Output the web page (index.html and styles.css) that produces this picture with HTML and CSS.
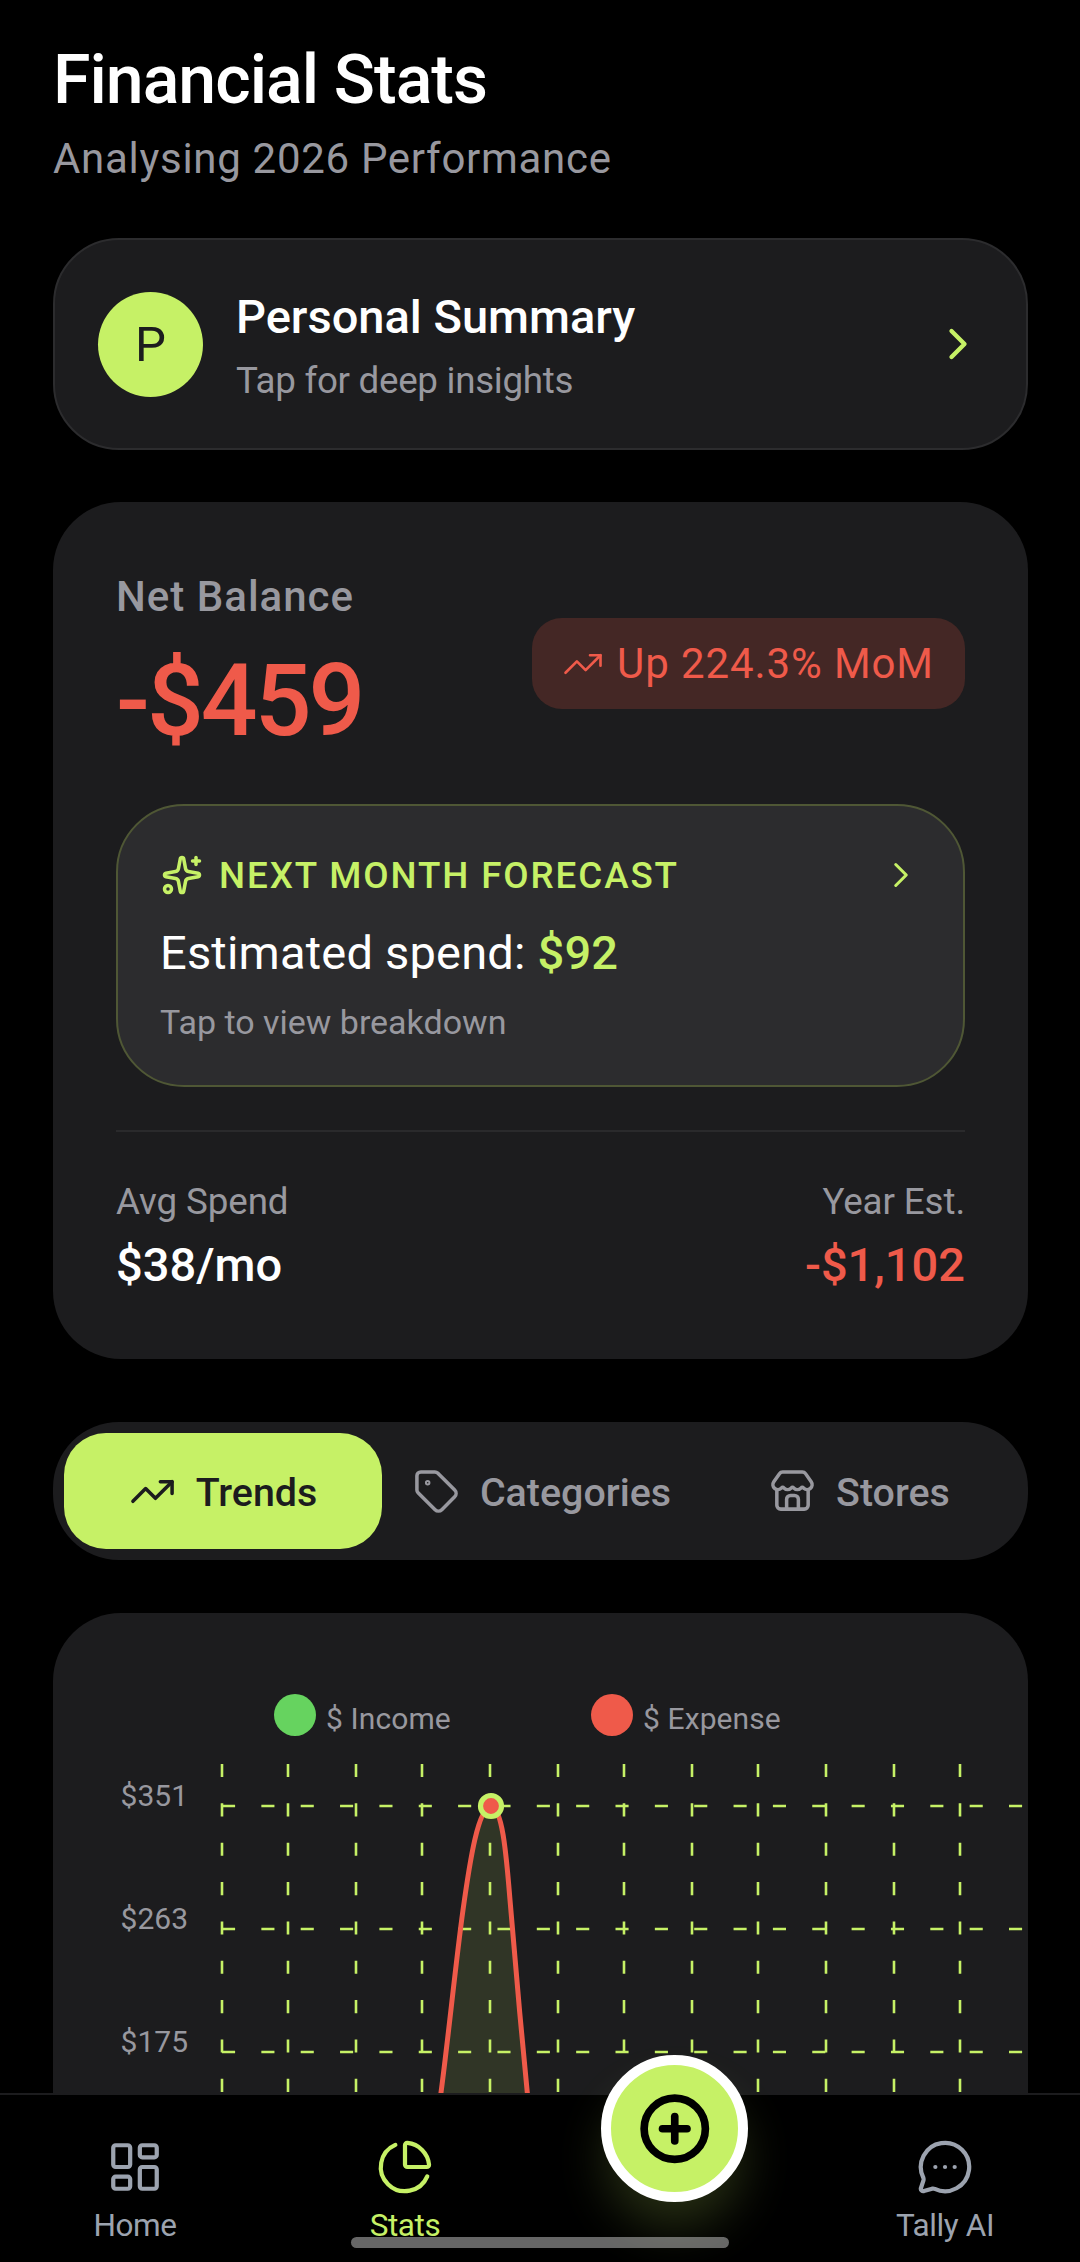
FILE: index.html
```html
<!DOCTYPE html>
<html lang="en">
<head>
<meta charset="utf-8">
<title>Financial Stats</title>
<link rel="stylesheet" href="styles.css">
</head>
<body>
<svg class="sprite" width="0" height="0" aria-hidden="true">
  <symbol id="i-chev" viewBox="0 0 24 24"><path d="m9 18 6-6-6-6"/></symbol>
  <symbol id="i-trend" viewBox="0 0 24 24"><polyline points="22 7 13.5 15.5 8.5 10.5 2 17"/><polyline points="16 7 22 7 22 13"/></symbol>
</svg>
<main class="page">
  <header class="head">
    <h1 class="title">Financial Stats</h1>
    <p class="subtitle">Analysing 2026 Performance</p>
  </header>

  <section class="summary">
    <div class="avatar">P</div>
    <div class="summary-text">
      <div class="summary-title">Personal Summary</div>
      <div class="summary-sub">Tap for deep insights</div>
    </div>
    <svg class="ico ico-chev lime"><use href="#i-chev"/></svg>
  </section>

  <section class="balance">
    <div class="balance-top">
      <div>
        <div class="balance-label">Net Balance</div>
        <div class="balance-value">-$459</div>
      </div>
      <div class="badge">
        <svg class="ico ico-badge"><use href="#i-trend"/></svg>
        <span>Up 224.3% MoM</span>
      </div>
    </div>
    <div class="forecast">
      <div class="forecast-head">
        <svg class="ico ico-spark" viewBox="0 0 24 24"><path d="M11.017 2.814a1 1 0 0 1 1.966 0l1.051 5.558a2 2 0 0 0 1.594 1.594l5.558 1.051a1 1 0 0 1 0 1.966l-5.558 1.051a2 2 0 0 0-1.594 1.594l-1.051 5.558a1 1 0 0 1-1.966 0l-1.051-5.558a2 2 0 0 0-1.594-1.594l-5.558-1.051a1 1 0 0 1 0-1.966l5.558-1.051a2 2 0 0 0 1.594-1.594z"/><path d="M20 2v4"/><path d="M22 4h-4"/><circle cx="4" cy="20" r="2"/></svg>
        <span class="forecast-label">NEXT MONTH FORECAST</span>
        <svg class="ico ico-chev-sm"><use href="#i-chev"/></svg>
      </div>
      <div class="forecast-est">Estimated spend: <b>$92</b></div>
      <div class="forecast-sub">Tap to view breakdown</div>
    </div>
    <div class="stats">
      <div>
        <div class="stat-label">Avg Spend</div>
        <div class="stat-value">$38/mo</div>
      </div>
      <div class="stat-right">
        <div class="stat-label">Year Est.</div>
        <div class="stat-value red">-$1,102</div>
      </div>
    </div>
  </section>

  <nav class="tabs">
    <div class="tab tab-active">
      <svg class="ico ico-tab"><use href="#i-trend"/></svg><span>Trends</span>
    </div>
    <div class="tab tab-cat">
      <svg class="ico ico-tab" viewBox="0 0 24 24"><path d="M12.586 2.586A2 2 0 0 0 11.172 2H4a2 2 0 0 0-2 2v7.172a2 2 0 0 0 .586 1.414l8.704 8.704a2.426 2.426 0 0 0 3.42 0l6.58-6.58a2.426 2.426 0 0 0 0-3.42z"/><circle cx="7.5" cy="7.5" r=".5"/></svg><span>Categories</span>
    </div>
    <div class="tab tab-store">
      <svg class="ico ico-tab" viewBox="0 0 24 24"><path d="M15 21v-5a2 2 0 0 0-2-2h-2a2 2 0 0 0-2 2v5"/><path d="M17.774 10.31a1.12 1.12 0 0 0-1.549 0 2.5 2.5 0 0 1-3.451 0 1.12 1.12 0 0 0-1.548 0 2.5 2.5 0 0 1-3.452 0 1.12 1.12 0 0 0-1.549 0 2.5 2.5 0 0 1-3.77-3.248l2.889-4.184A2 2 0 0 1 7 2h10a2 2 0 0 1 1.653.873l2.895 4.192a2.5 2.5 0 0 1-3.774 3.244"/><path d="M4 10.95V19a2 2 0 0 0 2 2h12a2 2 0 0 0 2-2v-8.05"/></svg><span>Stores</span>
    </div>
  </nav>

  <section class="chart">
    <svg class="plot" viewBox="53 1613 975 480" width="975" height="480">
      <circle class="dot-inc" cx="295" cy="1715" r="21"/>
      <text class="legend" x="326" y="1729">$ Income</text>
      <circle class="dot-exp" cx="612" cy="1715" r="21"/>
      <text class="legend" x="643" y="1729">$ Expense</text>
      <text class="axis" x="188" y="1806">$351</text>
      <text class="axis" x="188" y="1929">$263</text>
      <text class="axis" x="188" y="2052">$175</text>
      <g class="grid">
        <path d="M222 1764V2093M288 1764V2093M356 1764V2093M422 1764V2093M490 1764V2093M558 1764V2093M624 1764V2093M692 1764V2093M758 1764V2093M826 1764V2093M894 1764V2093M960 1764V2093"/>
        <path d="M222 1806H1028M222 1929H1028M222 2052H1028"/>
      </g>
      <path class="area" d="M491 1806C478 1808 470 1860 463 1910S447 2050 440 2100H528C522 2040 517 1960 510 1900S502 1808 491 1806Z"/>
      <path class="curve" d="M440 2100C447 2050 456 1960 463 1910S478 1808 491 1806C502 1808 506 1850 510 1900S522 2040 528 2100"/>
      <circle class="peak" cx="491" cy="1806" r="10.5"/>
    </svg>
  </section>
</main>

<footer class="bottom">
  <a class="nav-item">
    <svg class="ico ico-nav" viewBox="0 0 24 24"><rect x="3" y="3" width="7" height="9" rx="1"/><rect x="14" y="3" width="7" height="5" rx="1"/><rect x="14" y="12" width="7" height="9" rx="1"/><rect x="3" y="16" width="7" height="5" rx="1"/></svg>
    <span>Home</span>
  </a>
  <a class="nav-item nav-active">
    <svg class="ico ico-nav" viewBox="0 0 24 24"><path d="M21 12c.552 0 1.005-.449.95-.998a10 10 0 0 0-8.953-8.951c-.55-.055-.998.398-.998.95v8a1 1 0 0 0 1 1z"/><path d="M21.21 15.89A10 10 0 1 1 8 2.83"/></svg>
    <span>Stats</span>
  </a>
  <div class="nav-item"></div>
  <a class="nav-item">
    <svg class="ico ico-nav" viewBox="0 0 24 24"><path d="M2.992 16.342a2 2 0 0 1 .094 1.167l-1.065 3.29a1 1 0 0 0 1.236 1.168l3.413-.998a2 2 0 0 1 1.099.092 10 10 0 1 0-4.777-4.719"/><path d="M8 12h.01"/><path d="M12 12h.01"/><path d="M16 12h.01"/></svg>
    <span>Tally AI</span>
  </a>
</footer>
<button class="fab" aria-label="Add">
  <svg class="ico ico-fab" viewBox="0 0 24 24"><circle cx="12" cy="12" r="10"/><path d="M8 12h8"/><path d="M12 8v8"/></svg>
</button>
<div class="home-bar"></div>
</body>
</html>
```
FILE: styles.css
```css
* { box-sizing: border-box; }
html, body { margin: 0; padding: 0; background: #000; }
body {
  width: 1080px; height: 2262px; overflow: hidden; position: relative;
  font-family: Roboto, "Noto Sans", sans-serif; color: #fff;
}
.sprite { position: absolute; }
.page { padding: 0 52px 0 53px; display: flex; flex-direction: column; }
.ico { fill: none; stroke: currentColor; stroke-width: 2; stroke-linecap: round; stroke-linejoin: round; flex: none; }
.lime { color: #c6f166; }
.red { color: #ef5a4a; }

.head { padding-top: 38px; height: 238px; }
.title { margin: 0; font-size: 68px; line-height: 84px; font-weight: 500; letter-spacing: -1px; }
.subtitle { margin: 10px 0 0; font-size: 42px; line-height: 54px; color: #98989f; letter-spacing: .7px; }

.summary {
  height: 212px; background: #1c1c1e; border: 2.6px solid #2c2c2e; border-radius: 66px;
  display: flex; align-items: center; padding: 0 42px 0 43px;
}
.avatar {
  width: 105px; height: 105px; border-radius: 50%; background: #c6f166; color: #1c1c1e;
  display: flex; align-items: center; justify-content: center; font-size: 49px; flex: none;
}
.summary-text { margin-left: 33px; flex: 1; padding-top: 2px; }
.summary-title { font-size: 47px; line-height: 64px; font-weight: 500; }
.summary-sub { font-size: 36.75px; line-height: 50px; color: #98989f; margin-top: 7px; letter-spacing: -.3px; }
.ico-chev { width: 52px; height: 52px; }

.balance {
  margin-top: 52px; height: 857px; background: #1c1c1e; border-radius: 68px; padding: 66px 63px 0;
}
.balance-top { display: flex; justify-content: space-between; align-items: flex-start; height: 236px; }
.balance-label { font-size: 42px; line-height: 58px; font-weight: 500; color: #98989f; letter-spacing: 1px; }
.balance-value { font-size: 100px; line-height: 120px; font-weight: 500; color: #ef5a4a; margin-top: 15px; letter-spacing: -3px; }
.badge {
  margin-top: 50px; width: 433px; height: 91px; border-radius: 30px; background: #442725; color: #ef5a4a;
  display: flex; align-items: center; gap: 13px; padding-left: 30px; font-size: 42px; letter-spacing: .9px;
}
.ico-badge { width: 42px; height: 42px; stroke-width: 1.5; }
.forecast {
  height: 283px; background: #2c2c2e; border: 2.6px solid #4f5735; border-radius: 68px; padding: 44.4px 43px 0 42px;
}
.forecast-head { display: flex; align-items: center; color: #c6f166; height: 50px; }
.ico-spark { width: 42px; height: 42px; margin-left: 1px; }
.forecast-label { font-size: 36.75px; font-weight: 500; letter-spacing: 1.9px; margin-left: 16px; flex: 1; }
.ico-chev-sm { width: 42px; height: 42px; margin-right: -2px; stroke-width: 1.75; }
.forecast-est { font-size: 47px; line-height: 64px; margin-top: 21px; letter-spacing: .2px; }
.forecast-est b { font-weight: 500; color: #c6f166; }
.forecast-sub { font-size: 34px; line-height: 46px; color: #98989f; margin-top: 13.4px; }
.stats {
  margin-top: 43px; border-top: 2.6px solid #2a2a2c; padding-top: 45px;
  display: flex; justify-content: space-between;
}
.stat-right { text-align: right; }
.stat-label { font-size: 36.75px; line-height: 50px; color: #98989f; letter-spacing: -.1px; }
.stat-value { font-size: 47px; line-height: 64px; font-weight: 500; margin-top: 6.3px; }

.tabs {
  margin-top: 63px; height: 138px; background: #1c1c1e; border-radius: 66px; padding: 11px;
  display: flex; align-items: stretch; color: #98989f;
}
.tab { display: flex; align-items: center; justify-content: center; gap: 20px; font-size: 39.4px; font-weight: 500; }
.tab span { padding-top: 2px; }
.tab-active { width: 318px; background: #c6f166; color: #1c1c1e; border-radius: 42px; }
.tab-cat { width: 320px; }
.tab-store { flex: 1; }
.ico-tab { width: 47px; height: 47px; stroke-width: 1.8; }

.chart { margin-top: 53px; background: #1c1c1e; border-radius: 68px 68px 0 0; height: 480px; overflow: hidden; }
.plot { display: block; }
.legend { font-size: 30px; fill: #98989f; letter-spacing: .1px; }
.axis { font-size: 30px; fill: #98989f; text-anchor: end; }
.dot-inc { fill: #66d35f; }
.dot-exp { fill: #ef5a4a; }
.grid path { fill: none; stroke: #c6f166; stroke-width: 2.6; stroke-dasharray: 13.1 26.25; }
.area { fill: rgba(198, 241, 102, .12); }
.curve { fill: none; stroke: #ef5a4a; stroke-width: 5; }
.peak { fill: #ef5a4a; stroke: #c6f166; stroke-width: 5.2; }

.bottom {
  position: absolute; left: 0; right: 0; bottom: 0; height: 169px; background: #000;
  border-top: 2.6px solid #1c1c1e; display: grid; grid-template-columns: 270px 270px 270px 270px;
}
.nav-item { display: flex; flex-direction: column; align-items: center; padding-top: 42.5px; color: #9ca3af; font-size: 31.5px; letter-spacing: -.4px; }
.nav-item span { line-height: 44px; margin-top: 8px; }
.nav-active { color: #c6f166; }
.ico-nav { width: 58px; height: 58px; stroke-width: 1.75; }

.fab {
  position: absolute; left: 601px; top: 2055px; width: 147px; height: 147px; border-radius: 50%;
  background: #c6f166; border: 10.5px solid #fff; padding: 0; color: #000;
  display: flex; align-items: center; justify-content: center;
  box-shadow: 0 30px 50px -6px rgba(198, 241, 102, .2);
}
.ico-fab { width: 73.5px; height: 73.5px; stroke-width: 2.5; }
.home-bar {
  position: absolute; left: 351px; top: 2237px; width: 378px; height: 11px; border-radius: 6px;
  background: rgba(255, 255, 255, .4);
}
```
